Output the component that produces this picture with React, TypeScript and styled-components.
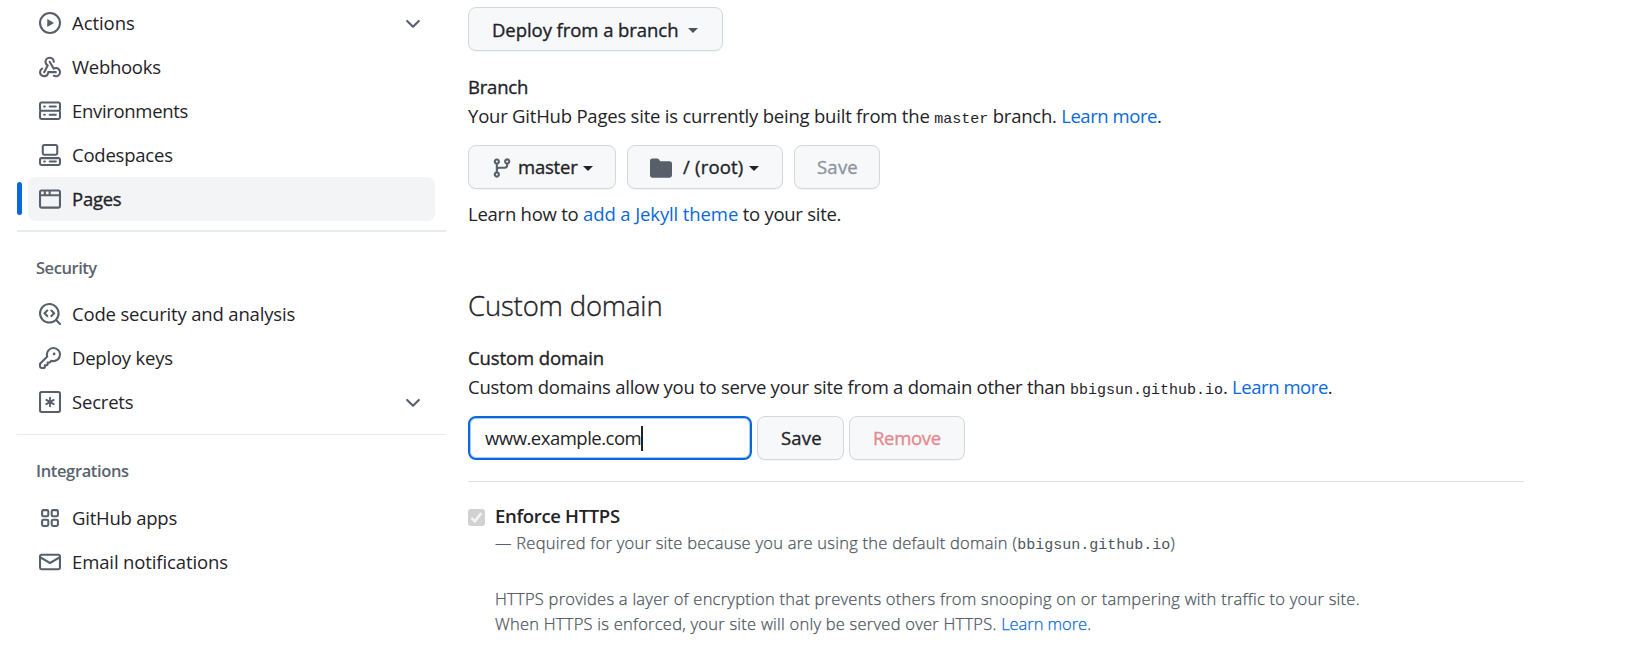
import React from 'react';
import styled, { createGlobalStyle } from 'styled-components';

const GlobalStyle = createGlobalStyle`
  * { box-sizing: border-box; }
  body {
    margin: 0;
    background: #fff;
    color: #1f2328;
    font-family: "Open Sans", "Noto Sans", sans-serif;
    font-size: 18.5px;
    overflow: hidden;
  }
`;

const Page = styled.div`
  display: flex;
  width: 1648px;
  height: 666px;
  overflow: hidden;
`;

const Sidebar = styled.nav`
  width: 429px;
  margin-left: 17px;
  padding-top: 1px;
  flex: none;
`;

const Svg = styled.svg`
  flex: none;
  width: 22px;
  height: 22px;
  fill: #57606a;
  display: block;
`;

const NavItem = styled.a<{ $active?: boolean }>`
  position: relative;
  display: flex;
  align-items: center;
  height: 44px;
  margin: 0 11px;
  padding: 0 11px;
  border-radius: 8px;
  background: ${(p) => (p.$active ? '#f3f4f6' : 'transparent')};
`;

const ActiveBar = styled.span`
  position: absolute;
  left: -11px;
  top: 5px;
  width: 5px;
  height: 33px;
  border-radius: 3px;
  background: #0969da;
`;

const NavLabel = styled.span`
  flex: 1;
  margin-left: 11px;
  padding-bottom: 2px;

  & + ${Svg} {
    margin-top: 2px;
  }
`;

const Text = styled.span<{ $track?: number; $medium?: boolean }>`
  letter-spacing: ${(p) => p.$track ?? 0}px;
  white-space: pre;
  ${(p) => p.$medium && '-webkit-text-stroke: 0.35px currentColor;'}
`;

const Divider = styled.div<{ $size: number; $top: number; $bottom: number }>`
  height: ${(p) => p.$size}px;
  margin: ${(p) => p.$top}px 0 ${(p) => p.$bottom}px;
  background: #e8ebee;
`;

const GroupTitle = styled.h3<{ $gap: number }>`
  margin: 0 0 ${(p) => p.$gap}px 19px;
  height: 24px;
  line-height: 24px;
  font-size: 16.5px;
  font-weight: 600;
  color: #59636e;
`;

const Main = styled.main`
  width: 1056px;
  margin-left: 22px;
  padding-top: 7px;
`;

const Line = styled.div`
  height: 29px;
  line-height: 29px;
  white-space: nowrap;
`;

const Link = styled.a<{ $track?: number }>`
  color: #0969da;
  letter-spacing: ${(p) => p.$track ?? 0}px;
`;

const Mono = styled.code`
  font-family: "Liberation Mono", monospace;
  font-size: 15px;
  line-height: 1;
  -webkit-text-stroke: 0;
`;

const ButtonLabel = styled.span<{ $gap?: number; $drop?: number }>`
  margin-left: ${(p) => p.$gap ?? 0}px;
  padding-bottom: ${(p) => 2 - (p.$drop ?? 0)}px;
`;

const Button = styled.button<{ $width: number; $left?: number; $tone?: 'muted' | 'danger' }>`
  display: flex;
  align-items: center;
  flex: none;
  width: ${(p) => p.$width}px;
  height: 44px;
  padding: 0 0 0 ${(p) => p.$left ?? 22}px;
  border: 1px solid #d5d8da;
  border-radius: 8px;
  background: #f6f8fa;
  box-shadow: 0 1px 0 rgba(31, 35, 40, 0.04);
  font: inherit;
  color: ${(p) => (p.$tone === 'muted' ? '#8c959f' : p.$tone === 'danger' ? '#e5898f' : '#1f2328')};

  ${Svg} {
    margin-top: 2px;
  }
`;

const Caret = styled.i<{ $gap: number; $color?: string }>`
  margin: 2px 0 0 ${(p) => p.$gap}px;
  border: 5.5px solid transparent;
  border-width: 5px 5px 0;
  border-top-color: ${(p) => p.$color ?? '#1f2328'};
`;

const Row = styled.div<{ $gap: number; $top: number }>`
  display: flex;
  gap: ${(p) => p.$gap}px;
  margin-top: ${(p) => p.$top}px;
`;

const BranchSection = styled.section`
  margin: 21px 0 57px;
`;

const JekyllHint = styled(Line)`
  margin-top: 10px;
`;

const Heading = styled.h2`
  margin: 0 0 17px;
  height: 41px;
  line-height: 41px;
  font-size: 27.5px;
  font-weight: 300;
  -webkit-text-stroke: 0.35px currentColor;
`;

const Field = styled.div`
  display: flex;
  align-items: center;
  width: 284px;
  height: 44px;
  padding-left: 15px;
  border: 2px solid #0969da;
  border-radius: 8px;
  box-shadow: inset 0 0 0 1px rgba(9, 105, 218, 0.35);
`;

const TextCursor = styled.span`
  width: 2px;
  height: 25px;
  background: #1f2328;
`;

const Rule = styled.hr`
  height: 1px;
  margin: 21px 0 19px;
  border: 0;
  background: #d8dee4;
`;

const Enforce = styled.section`
  display: flex;
`;

const CheckBox = styled.span`
  display: block;
  width: 17px;
  height: 17px;
  margin: 8px 10px 0 0;
  border-radius: 3px;
  background: #d1d1d1;
`;

const Check = styled.svg`
  display: block;
  width: 17px;
  height: 17px;
  fill: none;
  stroke: #f4f4f4;
  stroke-width: 2.6;
`;

const EnforceTitle = styled(Line)`
  font-weight: 600;
`;

const Note = styled.p`
  margin: 0;
  font-size: 16.5px;
  font-weight: 300;
  line-height: 25px;
  color: #4b545e;
  white-space: nowrap;
  -webkit-text-stroke: 0.25px currentColor;
`;

const Details = styled(Note)`
  margin-top: 31px;
`;

const paths = {
  play: 'M8 0a8 8 0 1 1 0 16A8 8 0 0 1 8 0ZM1.5 8a6.5 6.5 0 1 0 13 0 6.5 6.5 0 0 0-13 0Zm4.879-2.773 4.264 2.559a.25.25 0 0 1 0 .428l-4.264 2.559A.25.25 0 0 1 6 10.559V5.442a.25.25 0 0 1 .379-.215Z',
  webhook: 'M5.5 4.25a2.25 2.25 0 0 1 4.5 0 .75.75 0 0 0 1.5 0 3.75 3.75 0 1 0-6.14 2.889l-2.272 4.258a.75.75 0 0 0 1.324.706L7 7.25a.75.75 0 0 0-.309-1.015A2.25 2.25 0 0 1 5.5 4.25Z M7.364 3.607a.75.75 0 0 1 1.03.257l2.608 4.349a3.75 3.75 0 1 1-.628 6.785.75.75 0 0 1 .752-1.299 2.25 2.25 0 1 0-.033-3.88.75.75 0 0 1-1.03-.256L7.107 4.636a.75.75 0 0 1 .257-1.03Z M2.9 8.776A.75.75 0 0 1 2.625 9.8 2.25 2.25 0 1 0 6 11.75a.75.75 0 0 1 .75-.751h5.5a.75.75 0 0 1 0 1.5H7.425a3.751 3.751 0 1 1-5.55-3.998.75.75 0 0 1 1.024.274Z',
  server: 'M1.75 1h12.5c.966 0 1.75.784 1.75 1.75v4c0 .372-.116.717-.314 1 .198.283.314.628.314 1v4a1.75 1.75 0 0 1-1.75 1.75H1.75A1.75 1.75 0 0 1 0 12.75v-4c0-.358.109-.707.314-1a1.739 1.739 0 0 1-.314-1v-4C0 1.784.784 1 1.75 1ZM1.5 2.75v4c0 .138.112.25.25.25h12.5a.25.25 0 0 0 .25-.25v-4a.25.25 0 0 0-.25-.25H1.75a.25.25 0 0 0-.25.25Zm.25 5.75a.25.25 0 0 0-.25.25v4c0 .138.112.25.25.25h12.5a.25.25 0 0 0 .25-.25v-4a.25.25 0 0 0-.25-.25ZM7 4.75A.75.75 0 0 1 7.75 4h4.5a.75.75 0 0 1 0 1.5h-4.5A.75.75 0 0 1 7 4.75ZM7.75 10h4.5a.75.75 0 0 1 0 1.5h-4.5a.75.75 0 0 1 0-1.5ZM3 4.75A.75.75 0 0 1 3.75 4h.5a.75.75 0 0 1 0 1.5h-.5A.75.75 0 0 1 3 4.75ZM3.75 10h.5a.75.75 0 0 1 0 1.5h-.5a.75.75 0 0 1 0-1.5Z',
  codespaces: 'M0 11.25c0-.966.784-1.75 1.75-1.75h12.5c.966 0 1.75.784 1.75 1.75v3A1.75 1.75 0 0 1 14.25 16H1.75A1.75 1.75 0 0 1 0 14.25Zm2-9.5C2 .784 2.784 0 3.75 0h8.5C13.216 0 14 .784 14 1.75v5a1.75 1.75 0 0 1-1.75 1.75h-8.5A1.75 1.75 0 0 1 2 6.75Zm1.75-.25a.25.25 0 0 0-.25.25v5c0 .138.112.25.25.25h8.5a.25.25 0 0 0 .25-.25v-5a.25.25 0 0 0-.25-.25Zm-2 9.5a.25.25 0 0 0-.25.25v3c0 .138.112.25.25.25h12.5a.25.25 0 0 0 .25-.25v-3a.25.25 0 0 0-.25-.25Z M7 12.75a.75.75 0 0 1 .75-.75h4.5a.75.75 0 0 1 0 1.5h-4.5a.75.75 0 0 1-.75-.75Zm-4 0a.75.75 0 0 1 .75-.75h.5a.75.75 0 0 1 0 1.5h-.5a.75.75 0 0 1-.75-.75Z',
  browser: 'M0 2.75C0 1.784.784 1 1.75 1h12.5c.966 0 1.75.784 1.75 1.75v10.5A1.75 1.75 0 0 1 14.25 15H1.75A1.75 1.75 0 0 1 0 13.25ZM14.5 6h-13v7.25c0 .138.112.25.25.25h12.5a.25.25 0 0 0 .25-.25Zm-6-3.5v2h6V2.75a.25.25 0 0 0-.25-.25ZM5 2.5v2h2v-2Zm-3.25 0a.25.25 0 0 0-.25.25V4.5h2v-2Z',
  codescan: 'M8.47 4.97a.75.75 0 0 0 0 1.06L9.94 7.5 8.47 8.97a.75.75 0 1 0 1.06 1.06l2-2a.75.75 0 0 0 0-1.06l-2-2a.75.75 0 0 0-1.06 0ZM6.53 6.03a.75.75 0 0 0-1.06-1.06l-2 2a.75.75 0 0 0 0 1.06l2 2a.75.75 0 1 0 1.06-1.06L5.06 7.5l1.47-1.47Z M12.243 13.303a7.5 7.5 0 1 1 1.06-1.06l2.476 2.474a.75.75 0 1 1-1.06 1.06ZM7.5 13.5a6 6 0 1 0 0-12 6 6 0 0 0 0 12Z',
  key: 'M10.5 0a5.499 5.499 0 1 1-1.288 10.848l-.932.932a.749.749 0 0 1-.53.22H7v.75a.749.749 0 0 1-.22.53l-.5.5a.749.749 0 0 1-.53.22H5v.75a.749.749 0 0 1-.22.53l-.5.5a.749.749 0 0 1-.53.22h-2A1.75 1.75 0 0 1 0 14.25v-2c0-.199.079-.389.22-.53l4.932-4.932A5.5 5.5 0 0 1 10.5 0Zm-4 5.5c-.001.431.069.86.205 1.269a.75.75 0 0 1-.181.768L1.5 12.56v1.69c0 .138.112.25.25.25h1.69l.06-.06v-1.19a.75.75 0 0 1 .75-.75h1.19l.06-.06v-1.19a.75.75 0 0 1 .75-.75h1.19l1.023-1.025a.75.75 0 0 1 .768-.18A4 4 0 1 0 6.5 5.5ZM11 6a1 1 0 1 1 0-2 1 1 0 0 1 0 2Z',
  mail: 'M1.75 2h12.5c.966 0 1.75.784 1.75 1.75v8.5A1.75 1.75 0 0 1 14.25 14H1.75A1.75 1.75 0 0 1 0 12.25v-8.5C0 2.784.784 2 1.75 2ZM1.5 12.251c0 .138.112.25.25.25h12.5a.25.25 0 0 0 .25-.25V5.809L8.38 9.397a.75.75 0 0 1-.76 0L1.5 5.809v6.442Zm13-8.181v-.32a.25.25 0 0 0-.25-.25H1.75a.25.25 0 0 0-.25.25v.32L8 7.88Z',
  chevron: 'M12.78 5.22a.749.749 0 0 1 0 1.06l-4.25 4.25a.749.749 0 0 1-1.06 0L3.22 6.28a.749.749 0 1 1 1.06-1.06L8 8.939l3.72-3.719a.749.749 0 0 1 1.06 0Z',
  branch: 'M9.5 3.25a2.25 2.25 0 1 1 3 2.122V6A2.5 2.5 0 0 1 10 8.5H6a1 1 0 0 0-1 1v1.128a2.251 2.251 0 1 1-1.5 0V5.372a2.25 2.25 0 1 1 1.5 0v1.836A2.493 2.493 0 0 1 6 7h4a1 1 0 0 0 1-1v-.628A2.25 2.25 0 0 1 9.5 3.25Zm-6 0a.75.75 0 1 0 1.5 0 .75.75 0 0 0-1.5 0Zm8.25-.75a.75.75 0 1 0 0 1.5.75.75 0 0 0 0-1.5ZM4.25 12a.75.75 0 1 0 0 1.5.75.75 0 0 0 0-1.5Z',
  folder: 'M1.75 1A1.75 1.75 0 0 0 0 2.75v10.5C0 14.216.784 15 1.75 15h12.5A1.75 1.75 0 0 0 16 13.25v-8.5A1.75 1.75 0 0 0 14.25 3H7.5a.25.25 0 0 1-.2-.1l-.9-1.2C6.07 1.26 5.55 1 5 1H1.75Z',
};

type IconName = keyof typeof paths | 'secret' | 'apps';

function Icon({ name }: { name: IconName }) {
  if (name === 'secret') {
    return (
      <Svg viewBox="0 0 16 16">
        <g fill="none" stroke="#57606a" strokeWidth="1.5" strokeLinecap="round">
          <rect x="0.75" y="0.75" width="14.5" height="14.5" rx="1.2" />
          <path d="M8 4.9v6.2M5.3 6.45l5.4 3.1M10.7 6.45l-5.4 3.1" strokeWidth="1.35" />
        </g>
      </Svg>
    );
  }
  if (name === 'apps') {
    return (
      <Svg viewBox="0 0 16 16">
        <g fill="none" stroke="#57606a" strokeWidth="1.5">
          {[2.25, 9.25].map((x) => [2.25, 9.25].map((y) => <rect key={`${x}-${y}`} x={x} y={y} width="4.5" height="4.5" rx="1" />))}
        </g>
      </Svg>
    );
  }
  return (
    <Svg viewBox="0 0 16 16">
      <path d={paths[name]} fillRule={name === 'webhook' ? 'nonzero' : 'evenodd'} />
    </Svg>
  );
}

interface NavProps {
  icon: IconName;
  label: string;
  track: number;
  active?: boolean;
  expandable?: boolean;
}

function Nav({ icon, label, track, active, expandable }: NavProps) {
  return (
    <NavItem $active={active}>
      {active && <ActiveBar />}
      <Icon name={icon} />
      <NavLabel>
        <Text $track={track} $medium={active}>{label}</Text>
      </NavLabel>
      {expandable && <Icon name="chevron" />}
    </NavItem>
  );
}

export default function App() {
  return (
    <Page>
      <GlobalStyle />
      <Sidebar>
        <Nav icon="play" label="Actions" track={-0.05} expandable />
        <Nav icon="webhook" label="Webhooks" track={-0.28} />
        <Nav icon="server" label="Environments" track={-0.32} />
        <Nav icon="codespaces" label="Codespaces" track={-0.22} />
        <Nav icon="browser" label="Pages" track={-0.25} active />
        <Divider $size={2} $top={9} $bottom={24} />
        <GroupTitle $gap={12}><Text $track={-0.45}>Security</Text></GroupTitle>
        <Nav icon="codescan" label="Code security and analysis" track={-0.17} />
        <Nav icon="key" label="Deploy keys" track={-0.22} />
        <Nav icon="secret" label="Secrets" track={-0.2} expandable />
        <Divider $size={1} $top={10} $bottom={24} />
        <GroupTitle $gap={13}><Text $track={-0.36}>Integrations</Text></GroupTitle>
        <Nav icon="apps" label="GitHub apps" track={-0.23} />
        <Nav icon="mail" label="Email notifications" track={-0.12} />
      </Sidebar>
      <Main>
        <Button $width={255} $left={23}>
          <ButtonLabel $drop={2}><Text $track={-0.06} $medium>Deploy from a branch</Text></ButtonLabel>
          <Caret $gap={10} $color="#4b535c" />
        </Button>
        <BranchSection>
          <Line><Text $track={-0.2} $medium>Branch</Text></Line>
          <Line>
            <Text $track={-0.215}>{'Your GitHub Pages site is currently being built from the '}</Text>
            <Mono>master</Mono>
            <Text $track={-0.24}>{' branch. '}</Text>
            <Link $track={-0.45}>Learn more</Link>.
          </Line>
          <Row $gap={11} $top={15}>
            <Button $width={148}>
              <Icon name="branch" />
              <ButtonLabel $gap={5}><Text $track={-0.2} $medium>master</Text></ButtonLabel>
              <Caret $gap={5} />
            </Button>
            <Button $width={156}>
              <Icon name="folder" />
              <ButtonLabel $gap={11}><Text $track={0.2} $medium>/ (root)</Text></ButtonLabel>
              <Caret $gap={5} />
            </Button>
            <Button $width={86} $tone="muted"><ButtonLabel><Text $track={0.23} $medium>Save</Text></ButtonLabel></Button>
          </Row>
          <JekyllHint>
            <Text $track={-0.245}>{'Learn how to '}</Text>
            <Link $track={-0.11}>add a Jekyll theme</Link>
            <Text $track={-0.27}>{' to your site.'}</Text>
          </JekyllHint>
        </BranchSection>
        <Heading><Text $track={-0.17}>Custom domain</Text></Heading>
        <Line><Text $track={-0.1} $medium>Custom domain</Text></Line>
        <Line>
          <Text $track={-0.251}>{'Custom domains allow you to serve your site from a domain other than '}</Text>
          <Mono>bbigsun.github.io</Mono>
          <Text $track={-0.3}>{'. '}</Text>
          <Link $track={-0.45}>Learn more</Link>.
        </Line>
        <Row $gap={5} $top={15}>
          <Field>
            <ButtonLabel><Text $track={-0.5}>www.example.com</Text></ButtonLabel>
            <TextCursor />
          </Field>
          <Button $width={87} $left={23}><ButtonLabel><Text $track={0.2} $medium>Save</Text></ButtonLabel></Button>
          <Button $width={116} $left={23} $tone="danger"><ButtonLabel><Text $track={-0.33} $medium>Remove</Text></ButtonLabel></Button>
        </Row>
        <Rule />
        <Enforce>
          <CheckBox>
            <Check viewBox="0 0 17 17"><path d="M3.4 8.8 6.8 12.2 13.4 4.2" /></Check>
          </CheckBox>
          <div>
            <EnforceTitle><Text $track={-0.33}>Enforce HTTPS</Text></EnforceTitle>
            <Note>
              <Text $track={0.253}>{'— Required for your site because you are using the default domain ('}</Text>
              <Mono>bbigsun.github.io</Mono>)
            </Note>
            <Details>
              <Text $track={0.245}>HTTPS provides a layer of encryption that prevents others from snooping on or tampering with traffic to your site.</Text>
              <br />
              <Text $track={0.24}>{'When HTTPS is enforced, your site will only be served over HTTPS. '}</Text>
              <Link $track={-0.05}>Learn more</Link>.
            </Details>
          </div>
        </Enforce>
      </Main>
    </Page>
  );
}
